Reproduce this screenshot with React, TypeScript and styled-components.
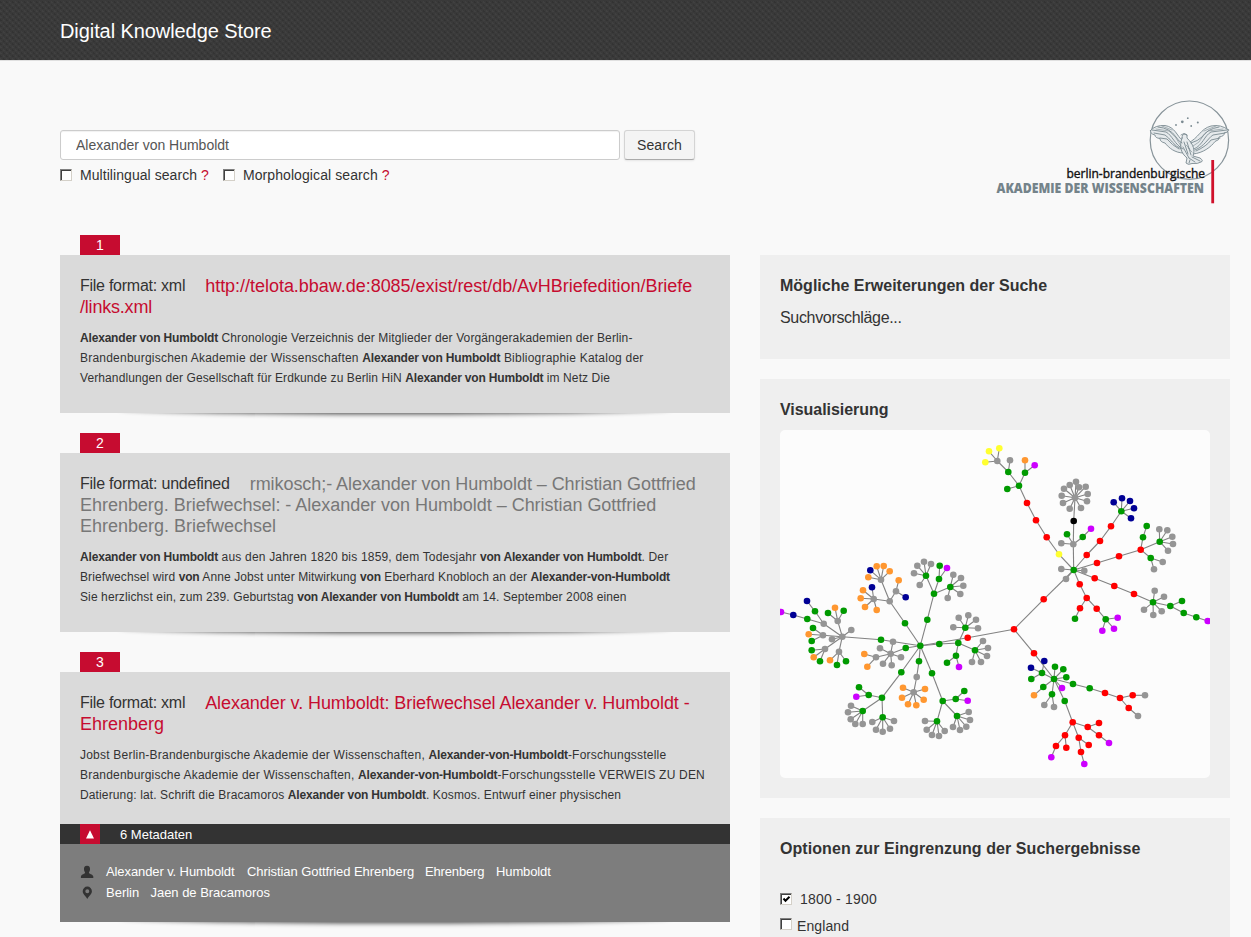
import React from "react";
import styled, { createGlobalStyle, css } from "styled-components";

const GlobalStyle = createGlobalStyle`
  * { box-sizing: border-box; }
  html, body { margin: 0; padding: 0; }
  body {
    background: #f9f9f9;
    color: #333;
    font-family: "Liberation Sans", Arial, sans-serif;
    font-size: 14px;
    overflow: hidden;
  }
`;

const Page = styled.div`
  width: 1251px;
  height: 937px;
  overflow: hidden;
`;

const Header = styled.header`
  height: 60px;
  padding: 2px 0 0 60px;
  display: flex;
  align-items: center;
  background:
    repeating-linear-gradient(45deg, rgba(255, 255, 255, 0.035) 0 2.12px, transparent 2.12px 4.24px),
    conic-gradient(#393939 25%, #343434 0 50%, #3a3a3a 0 75%, #333 0) 0 0 / 6px 6px;
`;

const SiteTitle = styled.h1`
  margin: 0;
  color: #fff;
  font-size: 20px;
  font-weight: 400;
  line-height: 24px;
  letter-spacing: -0.08px;
`;

const Top = styled.div`
  height: 175px;
  padding: 39px 21px 0 60px;
  border-top: 1px solid #e0e0e0;
  display: flex;
  justify-content: space-between;
`;

const SearchForm = styled.form`
  padding-top: 30px;
`;

const SearchRow = styled.div`
  display: flex;
  gap: 4px;
`;

const SearchInput = styled.input`
  width: 560px;
  height: 30px;
  padding: 0 15px;
  border: 1px solid #ccc;
  border-radius: 3px;
  background: #fff;
  box-shadow: inset 0 1px 1px rgba(0, 0, 0, 0.06);
  color: #555;
  font: 14px "Liberation Sans", Arial, sans-serif;
  letter-spacing: -0.02px;
  outline: none;
`;

const SearchButton = styled.button`
  width: 71px;
  height: 30px;
  padding: 0;
  border: 1px solid #d4d4d4;
  border-bottom-color: #aaa;
  border-radius: 3px;
  background: #f4f4f4;
  box-shadow: 0 1px 2px rgba(0, 0, 0, 0.08);
  color: #333;
  font: 14px "Liberation Sans", Arial, sans-serif;
  letter-spacing: 0.1px;
`;

const CheckRow = styled.div`
  display: flex;
  gap: 14px;
  margin-top: 5px;
`;

const CheckLabel = styled.label<{ $gap?: number; $tracking?: number }>`
  display: flex;
  align-items: center;
  gap: ${(p) => p.$gap ?? 8}px;
  height: 20px;
  letter-spacing: ${(p) => p.$tracking ?? 0.2}px;
  white-space: pre;
`;

const Box = styled.span<{ $raise?: number }>`
  width: 12px;
  height: 12px;
  flex: none;
  margin-bottom: ${(p) => p.$raise ?? 0}px;
  border: solid;
  border-width: 1px;
  border-color: #808080 #d4d0c8 #d4d0c8 #808080;
  box-shadow: inset 1px 1px 0 #404040;
  background: #fff;
  display: flex;
`;

const Hint = styled.span`
  color: #c60c30;
`;

const Columns = styled.div`
  display: flex;
  align-items: flex-start;
  gap: 30px;
  padding-left: 60px;
`;

const Results = styled.main`
  width: 670px;
  display: flex;
  flex-direction: column;
  gap: 20px;
`;

const Sidebar = styled.aside`
  width: 470px;
  padding-top: 20px;
  display: flex;
  flex-direction: column;
  gap: 20px;
`;

const Tag = styled.div`
  width: 40px;
  height: 20px;
  margin-left: 20px;
  background: #c60c30;
  color: #fff;
  line-height: 20px;
  text-align: center;
`;

const Card = styled.article`
  position: relative;
  z-index: 0;
  &::before {
    content: "";
    position: absolute;
    z-index: -1;
    left: 60px;
    right: 60px;
    bottom: 0;
    height: 40px;
    border-radius: 50% / 6px;
    box-shadow: 0 1px 5px rgba(0, 0, 0, 0.75);
  }
`;

const CardBody = styled.div<{ $tight?: boolean }>`
  padding: 20px 20px ${(p) => (p.$tight ? 19 : 25)}px;
  background: #dadada;
`;

const CardTitle = styled.h2`
  margin: 0 0 10px;
  font-size: 18px;
  font-weight: 400;
  line-height: 21px;
`;

const titleTone = { red: "#c60c30", grey: "#777" };

const Line = styled.span<{ $tracking: number }>`
  display: block;
  white-space: pre;
  letter-spacing: ${(p) => p.$tracking}px;
`;

const TitleRow = styled.span`
  display: flex;
  gap: 20px;
`;

const Format = styled.span<{ $tracking: number }>`
  font-size: 16px;
  letter-spacing: ${(p) => p.$tracking}px;
  white-space: pre;
`;

const TitleLink = styled.a<{ $tone: "red" | "grey"; $tracking: number; $block?: boolean }>`
  color: ${(p) => titleTone[p.$tone]};
  letter-spacing: ${(p) => p.$tracking}px;
  white-space: pre;
  ${(p) => (p.$block ? css`display: block;` : css`padding-top: 1px;`)}
`;

const Excerpt = styled.p`
  margin: 0;
  font-size: 12px;
  line-height: 20px;
  b { letter-spacing: -0.18px; }
`;

const MetaBar = styled.div`
  height: 20px;
  padding-left: 20px;
  display: flex;
  gap: 20px;
  background: #333;
  color: #fff;
  font-size: 13px;
  line-height: 21px;
`;

const Toggle = styled.span`
  width: 20px;
  height: 20px;
  background: #c60c30;
  display: flex;
  align-items: center;
  justify-content: center;
`;

const MetaPanel = styled.div`
  height: 78px;
  padding: 17px 20px 0;
  background: #7d7d7d;
  color: #fff;
  font-size: 13px;
`;

const MetaRow = styled.div`
  height: 21px;
  display: flex;
  align-items: center;
`;

const MetaIcon = styled.svg`
  width: 14px;
  height: 14px;
  margin-right: 12px;
  fill: #333;
`;

const MetaItem = styled.span<{ $w?: number; $tracking?: number }>`
  width: ${(p) => (p.$w ? p.$w + "px" : "auto")};
  letter-spacing: ${(p) => p.$tracking ?? 0}px;
  white-space: pre;
`;

const Panel = styled.section<{ $h: number }>`
  height: ${(p) => p.$h}px;
  padding: 20px;
  background: #efefef;
`;

const PanelTitle = styled.h3<{ $tracking: number }>`
  margin: 0;
  font-size: 16px;
  line-height: 21px;
  letter-spacing: ${(p) => p.$tracking}px;
`;

const Suggest = styled.p`
  margin: 11px 0 0;
  font-size: 16px;
  line-height: 21px;
  letter-spacing: -0.33px;
`;

const Chart = styled.svg`
  display: block;
  width: 430px;
  height: 348px;
  margin-top: 10px;
  border-radius: 5px;
  background: #fcfcfc;
`;

const Options = styled.div`
  margin-top: 30px;
  display: flex;
  flex-direction: column;
  gap: 7px;
`;

const colours = {
  a: "#959595",
  g: "#009a00",
  o: "#ff9730",
  r: "#ff0000",
  p: "#cc00ff",
  n: "#000095",
  y: "#ffff30",
  k: "#000000",
};
type Tone = keyof typeof colours;
type GraphNode = [Tone, number, number, GraphNode[]?];

const rightTree: GraphNode = ["g", 293.7, 140, [
  ["a", 281.3, 139], ["a", 286, 149], ["a", 304.3, 140.7],
  ["y", 279, 124.3, [["r", 266.7, 107.3, [["r", 256, 90.3, [["r", 247, 73, [["g", 239, 55.7, [
    ["g", 227.3, 59],
    ["g", 228.3, 42, [["a", 230, 30.3], ["a", 217.3, 31, [["y", 209, 21.3], ["y", 219.3, 18.3], ["y", 205.3, 32.3]]]]],
    ["g", 245, 42.7, [["o", 245, 30.3], ["p", 254.7, 35.3]]],
  ]]]]]]]]]],
  ["a", 293.3, 114.3, [
    ["a", 281.3, 113.3], ["g", 287, 104.3], ["g", 302.7, 107, [["p", 311, 98.7]]],
    ["k", 293.7, 91, [["a", 295, 67.7, [
      ["a", 296, 51.7], ["a", 305.7, 56.7], ["a", 299, 57.3], ["a", 289.7, 55], ["a", 284, 58.7], ["a", 281.7, 65.7],
      ["a", 283, 73], ["a", 289.7, 78.7], ["a", 301, 78], ["a", 307, 71.3], ["a", 307.7, 64],
    ]]]],
  ]],
  ["r", 306.7, 125, [["r", 320, 111, [["r", 331, 96.3, [["g", 341.3, 81.3, [
    ["n", 333.7, 72.3], ["n", 342, 68.3], ["n", 350, 71], ["n", 354, 78.3], ["n", 351, 88.3],
  ]]]]]]]],
  ["r", 317, 133, [["r", 339, 126.3, [["r", 360.7, 119.7, [
    ["g", 363, 107.3, [["g", 366.7, 96]]],
    ["g", 379.7, 111.7, [["a", 379.3, 99.3], ["a", 387.3, 100.3], ["a", 392.3, 106.7], ["a", 393, 114], ["a", 388, 120.7]]],
    ["g", 370.7, 128, [["a", 382.7, 132], ["a", 374, 139.3]]],
  ]]]]]],
  ["r", 314.7, 148.3, [["r", 334.3, 156, [["r", 354, 164, [["g", 373, 172.3, [
    ["a", 374.7, 160.7], ["a", 384, 166.7], ["a", 364, 179.7], ["a", 373.3, 185], ["a", 381.7, 181.3],
    ["g", 390.3, 176, [["g", 402, 171], ["g", 403.7, 183, [["g", 416.3, 187.3, [["p", 427.7, 191]]]]]]],
  ]]]]]]]],
  ["r", 299.7, 154.3, [["r", 306.7, 168, [
    ["r", 300, 178.3, [["g", 295, 188.7]]],
    ["r", 316.7, 178.7, [["g", 325.7, 189.3, [["p", 337.7, 187.7], ["p", 334, 198.7], ["p", 322.3, 200.7]]]]],
  ]]]],
]];

const lowerTree: GraphNode = ["g", 274, 249, [
  ["g", 262, 243, [["n", 251, 237.7], ["n", 264.3, 231], ["g", 251.3, 249]]],
  ["g", 275, 236.7], ["g", 283.3, 239.3], ["g", 286.3, 247.3], ["p", 282, 258],
  ["g", 263.3, 257, [["o", 254, 265.3]]],
  ["g", 272, 264.3, [["a", 264.3, 275], ["a", 274, 277]]],
  ["g", 284.7, 271, [["r", 292.7, 292.3, [
    ["r", 285, 305.3, [["r", 276, 316, [["p", 271.3, 327.3]]], ["r", 286.3, 317.7]]],
    ["r", 298.7, 307.7, [["r", 308.7, 315], ["r", 301, 322, [["p", 304.3, 334]]]]],
    ["r", 307.7, 297, [["r", 319, 293], ["r", 319, 305.3, [["p", 329, 313]]]]],
  ]]]],
  ["g", 293, 254, [["g", 309.7, 258.3, [["r", 325, 263, [["r", 340, 268, [
    ["r", 352.7, 265.3, [["a", 365, 265.3]]], ["r", 348.7, 278, [["a", 358, 286]]],
  ]]]]]]]],
]];

const graph: GraphNode = ["g", 140.3, 215.7, [
  ["g", 147.3, 189.7, [["g", 154, 163.7, [
    ["g", 146, 145.7, [["a", 137.3, 135.7], ["a", 144, 131.7], ["a", 151, 134], ["a", 134, 143.3], ["a", 139.7, 155]]],
    ["g", 159, 149, [["g", 159.7, 135.7], ["p", 167, 138]]],
    ["g", 170.3, 157, [["a", 173.3, 144.7], ["a", 181, 148], ["a", 183.3, 155.7], ["a", 180.3, 164], ["a", 167.7, 168]]],
  ]]]],
  ["g", 125, 193.3, [["a", 109.7, 171.3, [
    ["a", 101, 149.7, [["n", 90.3, 140.3], ["o", 96.7, 136.3], ["o", 103.7, 136], ["o", 109.7, 141.3], ["o", 88.3, 147.3]]],
    ["a", 116, 161.3, [["o", 118.7, 150.3], ["n", 125.7, 167.3]]],
    ["a", 93.7, 169, [["n", 92, 157.3], ["o", 83, 160.3], ["o", 80.7, 168.3], ["o", 85, 177], ["o", 96.7, 180]]],
  ]]]],
  ["g", 101, 209.7, [["a", 62.3, 206.7, [
    ["a", 71.3, 200], ["a", 52, 209.3],
    ["a", 57.7, 191, [["g", 48, 183], ["o", 55, 177.7], ["g", 63.7, 180.7]]],
    ["a", 43.7, 193.7, [["g", 35, 181.3, [["n", 27, 171]]], ["g", 27.3, 189, [["n", 13.3, 185, [["p", 1, 182]]]]]]],
    ["a", 43, 205.3, [["g", 33, 198], ["o", 28.7, 204.3], ["g", 31.7, 211]]],
    ["a", 45, 219, [["g", 31.7, 220.3], ["o", 33.7, 227.3], ["g", 40, 231.3]]],
    ["a", 59, 221.7, [["o", 50, 230.3], ["g", 57, 235], ["g", 66, 231.3]]],
  ]]]],
  ["g", 125.7, 218, [["a", 110.7, 223.7, [
    ["a", 113, 211.7], ["a", 100, 218.3], ["a", 96, 227.3, [["o", 84.3, 224], ["o", 87.3, 236.7]]],
    ["a", 121, 227.3], ["a", 103, 233.7], ["a", 111.7, 235.3],
  ]]]],
  ["g", 159.3, 214, [["g", 178.3, 213, [
    ["g", 185.3, 197.7, [["a", 178.7, 187.7], ["a", 188.3, 185.3], ["a", 196, 189.7], ["a", 198, 198.3], ["a", 173.3, 197.3]]],
    ["g", 195, 220.3, [["a", 203, 211], ["a", 208, 218], ["a", 207, 226], ["a", 201, 232], ["a", 192, 232]]],
    ["g", 176, 225.7, [["g", 167, 232.7], ["p", 179, 237]]],
  ]]]],
  ["r", 187.7, 207.7, [["r", 234, 199.3, [
    ["r", 263.7, 169.3, [rightTree]],
    ["r", 254, 223.3, [lowerTree]],
  ]]]],
  ["g", 139, 231.3, [["a", 136.7, 247, [["a", 133.7, 262.3, [
    ["o", 123, 257.7], ["o", 145, 259], ["o", 122, 267.7], ["o", 143.7, 269.7], ["o", 128, 274.3], ["o", 136.3, 275.3],
  ]]]]]],
  ["g", 121.3, 242.3, [["g", 102, 267.7, [
    ["g", 88.7, 265, [["g", 79, 257.3], ["p", 76.3, 266.7]]],
    ["g", 82.7, 281, [["a", 71, 275.7], ["a", 68, 282.3], ["a", 70.7, 289.3], ["a", 75.3, 294], ["a", 82.7, 294]]],
    ["g", 102.7, 287.3, [["a", 92.3, 292], ["a", 96, 299.7], ["a", 102.7, 301.7], ["a", 110, 298.7], ["a", 114, 291]]],
  ]]]],
  ["g", 152, 243.3, [["g", 162.7, 271, [
    ["g", 175.7, 269, [["g", 184.3, 261], ["p", 187.7, 270.7]]],
    ["g", 157, 291.3, [["a", 145, 291], ["a", 146.7, 299.7], ["a", 152, 305], ["a", 159, 306], ["a", 164.7, 301]]],
    ["g", 177, 286, [["a", 188.7, 282], ["a", 190, 290], ["a", 186.3, 296.7], ["a", 180, 300], ["a", 173, 297]]],
  ]]]],
]];

const edges: number[][] = [];
const dots: [Tone, number, number][] = [];
const walk = ([tone, x, y, children]: GraphNode) => {
  dots.push([tone, x, y]);
  (children ?? []).forEach((child) => {
    edges.push([x, y, child[1], child[2]]);
    walk(child);
  });
};
walk(graph);

const Visualisation = () => (
  <Chart viewBox="0 0 430 348">
    {edges.map(([x1, y1, x2, y2], i) => (
      <line key={i} x1={x1} y1={y1} x2={x2} y2={y2} stroke="#828282" strokeWidth="1.1" />
    ))}
    {dots.map(([tone, x, y], i) => (
      <circle key={i} cx={x} cy={y} r="3.3" fill={colours[tone]} />
    ))}
  </Chart>
);

const LogoSvg = styled.svg`
  width: 235px;
  height: 106px;
  flex: none;
`;

const Logo = () => (
  <LogoSvg viewBox="995 100 235 106">
    <circle cx="1189.4" cy="140.2" r="39.2" fill="none" stroke="#88949a" strokeWidth="1.2" />
    <g fill="#7b8a91">
      <circle cx="1176" cy="125" r="0.9" />
      <circle cx="1182.3" cy="121.8" r="1.4" />
      <circle cx="1187.8" cy="118.2" r="0.9" />
      <circle cx="1191.2" cy="126" r="0.9" />
      <circle cx="1197.8" cy="122.6" r="1" />
    </g>
    <g fill="#e6eaec" stroke="#7b8a91" strokeWidth="0.9" strokeLinejoin="round" strokeLinecap="round">
      <path d="M1150.5 130.5 Q1155 125 1165 125.5 C1175 127 1177 136 1182 140 L1184 153 C1175 153 1169 148 1165 143 Q1160 142 1160 138.5 Q1155 138 1155 135 Q1150 134 1150.5 130.5Z" />
      <path d="M1228.5 130 Q1221 124 1211 126 C1200 129 1199 138 1188 143 L1193 154 C1203 153 1211 147 1215 141.5 Q1220 140 1219 137 Q1225 136 1224 133 Q1228 133 1228.5 130Z" />
      <path d="M1182 138 Q1182 134 1185 134 Q1188 134 1187 138 C1194 145 1195 150 1193 156 L1200 158 Q1204 161 1201 162 Q1198 164 1192 163.5 Q1188 165.5 1186 163 L1187 158 C1181 153 1179 147 1182 138Z" />
      <path fill="none" d="M1152 130 L1166 132 C1172 135 1175 145 1183 149 M1154 133 L1165 135 C1170 138 1174 146 1181 149 M1158 127 Q1170 128 1176 137 Q1179 142 1182 143 M1160 138 L1167 139 Q1172 145 1179 149 M1227 130 L1211 132 C1204 136 1203 145 1194 149 M1225 133 L1213 135 C1208 138 1205 146 1195 150 M1219 127 Q1207 129 1202 137 Q1198 141 1191 143 M1220 138 L1211 140 Q1207 146 1196 151 M1184 142 L1188 154 M1187 142 L1191 155 M1183 147 L1189 158 M1189 158 L1195 162 M1192 157 L1200 161 M1190 160 L1189 163 M1181 135 L1184 133.5 L1187 135" />
      <path fill="none" strokeWidth="0.6" d="M1156 129 L1169 131 Q1176 136 1181 146 M1223 129 L1208 131 Q1203 135 1199 142 L1193 146 M1186 145 L1190 149 M1188 148 L1192 152 M1162 126 L1172 130 M1216 126 L1204 131" />
    </g>
    <text x="1066.5" y="177.5" fontFamily="Open Sans, sans-serif" fontSize="13" fill="#111" stroke="#111" strokeWidth="0.4" textLength="138.5" lengthAdjust="spacingAndGlyphs">berlin-brandenburgische</text>
    <text x="996.5" y="193" fontFamily="Open Sans, sans-serif" fontWeight="800" fontSize="13.2" fill="#74838a" textLength="207.5" lengthAdjust="spacingAndGlyphs">AKADEMIE DER WISSENSCHAFTEN</text>
    <rect x="1211.3" y="160" width="2.8" height="43.3" fill="#d0112b" />
  </LogoSvg>
);

const App = () => (
  <Page>
    <GlobalStyle />
    <Header>
      <SiteTitle>Digital Knowledge Store</SiteTitle>
    </Header>
    <Top>
      <SearchForm>
        <SearchRow>
          <SearchInput defaultValue="Alexander von Humboldt" />
          <SearchButton type="button">Search</SearchButton>
        </SearchRow>
        <CheckRow>
          <CheckLabel $tracking={0.06}><Box /><span>Multilingual search <Hint>?</Hint></span></CheckLabel>
          <CheckLabel $tracking={0.09}><Box /><span>Morphological search <Hint>?</Hint></span></CheckLabel>
        </CheckRow>
      </SearchForm>
      <Logo />
    </Top>
    <Columns>
      <Results>
        <div>
          <Tag>1</Tag>
          <Card>
            <CardBody>
              <CardTitle>
                <TitleRow>
                  <Format $tracking={-0.26}>File format: xml</Format>
                  <TitleLink $tone="red" $tracking={-0.03}>http://telota.bbaw.de:8085/exist/rest/db/AvHBriefedition/Briefe</TitleLink>
                </TitleRow>
                <TitleLink $tone="red" $tracking={-0.2} $block>/links.xml</TitleLink>
              </CardTitle>
              <Excerpt>
                <Line $tracking={0.12}><b>Alexander von Humboldt</b> Chronologie Verzeichnis der Mitglieder der Vorgängerakademien der Berlin-</Line>
                <Line $tracking={0.22}>Brandenburgischen Akademie der Wissenschaften <b>Alexander von Humboldt</b> Bibliographie Katalog der</Line>
                <Line $tracking={0.1}>Verhandlungen der Gesellschaft für Erdkunde zu Berlin HiN <b>Alexander von Humboldt</b> im Netz Die</Line>
              </Excerpt>
            </CardBody>
          </Card>
        </div>
        <div>
          <Tag>2</Tag>
          <Card>
            <CardBody>
              <CardTitle>
                <TitleRow>
                  <Format $tracking={-0.23}>File format: undefined</Format>
                  <TitleLink $tone="grey" $tracking={-0.06}>rmikosch;- Alexander von Humboldt – Christian Gottfried</TitleLink>
                </TitleRow>
                <TitleLink $tone="grey" $tracking={-0.03} $block>Ehrenberg. Briefwechsel: - Alexander von Humboldt – Christian Gottfried</TitleLink>
                <TitleLink $tone="grey" $tracking={0} $block>Ehrenberg. Briefwechsel</TitleLink>
              </CardTitle>
              <Excerpt>
                <Line $tracking={0.19}><b>Alexander von Humboldt</b> aus den Jahren 1820 bis 1859, dem Todesjahr <b>von Alexander von Humboldt</b>. Der</Line>
                <Line $tracking={0.11}>Briefwechsel wird <b>von</b> Anne Jobst unter Mitwirkung <b>von</b> Eberhard Knobloch an der <b>Alexander-von-Humboldt</b></Line>
                <Line $tracking={0.11}>Sie herzlichst ein, zum 239. Geburtstag <b>von Alexander von Humboldt</b> am 14. September 2008 einen</Line>
              </Excerpt>
            </CardBody>
          </Card>
        </div>
        <div>
          <Tag>3</Tag>
          <Card>
            <CardBody $tight>
              <CardTitle>
                <TitleRow>
                  <Format $tracking={-0.26}>File format: xml</Format>
                  <TitleLink $tone="red" $tracking={-0.07}>Alexander v. Humboldt: Briefwechsel Alexander v. Humboldt -</TitleLink>
                </TitleRow>
                <TitleLink $tone="red" $tracking={0} $block>Ehrenberg</TitleLink>
              </CardTitle>
              <Excerpt>
                <Line $tracking={0.22}>Jobst Berlin-Brandenburgische Akademie der Wissenschaften, <b>Alexander-von-Humboldt</b>-Forschungsstelle</Line>
                <Line $tracking={0.2}>Brandenburgische Akademie der Wissenschaften, <b>Alexander-von-Humboldt</b>-Forschungsstelle VERWEIS ZU DEN</Line>
                <Line $tracking={0.13}>Datierung: lat. Schrift die Bracamoros <b>Alexander von Humboldt</b>. Kosmos. Entwurf einer physischen</Line>
              </Excerpt>
            </CardBody>
            <MetaBar>
              <Toggle>
                <svg width="8" height="9" viewBox="0 0 8 9"><path d="M4 0.2 L8 8.5 H0Z" fill="#fff" /></svg>
              </Toggle>
              <MetaItem>6 Metadaten</MetaItem>
            </MetaBar>
            <MetaPanel>
              <MetaRow>
                <MetaIcon viewBox="0 0 14 14"><path d="M7 0.8 C9.4 0.8 10.2 2.2 10 4.5 C10 6 9.2 6.6 8.9 7.6 C8.7 9 12.8 9.4 13.3 11.5 V13 H0.9 V11.5 C1.4 9.4 5.3 9 5.1 7.6 C4.8 6.6 4 6 4 4.5 C3.8 2.2 4.6 0.8 7 0.8Z" /></MetaIcon>
                <MetaItem $w={141} $tracking={-0.1}>Alexander v. Humboldt</MetaItem>
                <MetaItem $w={178} $tracking={-0.07}>Christian Gottfried Ehrenberg</MetaItem>
                <MetaItem $w={71} $tracking={-0.15}>Ehrenberg</MetaItem>
                <MetaItem $tracking={-0.12}>Humboldt</MetaItem>
              </MetaRow>
              <MetaRow>
                <MetaIcon viewBox="0 0 14 14"><path fillRule="evenodd" d="M7.3 0.6 A4.6 4.6 0 0 1 11.9 5.2 C11.9 8.2 9.2 9.4 7.3 13 C5.4 9.4 2.7 8.2 2.7 5.2 A4.6 4.6 0 0 1 7.3 0.6Z M7.3 3.2 A2 2 0 1 0 7.3 7.2 A2 2 0 0 0 7.3 3.2Z" /></MetaIcon>
                <MetaItem $w={44.5}>Berlin</MetaItem>
                <MetaItem $tracking={-0.03}>Jaen de Bracamoros</MetaItem>
              </MetaRow>
            </MetaPanel>
          </Card>
        </div>
      </Results>
      <Sidebar>
        <Panel $h={104}>
          <PanelTitle $tracking={0.01}>Mögliche Erweiterungen der Suche</PanelTitle>
          <Suggest>Suchvorschläge...</Suggest>
        </Panel>
        <Panel $h={419}>
          <PanelTitle $tracking={-0.05}>Visualisierung</PanelTitle>
          <Visualisation />
        </Panel>
        <Panel $h={200}>
          <PanelTitle $tracking={0.07}>Optionen zur Eingrenzung der Suchergebnisse</PanelTitle>
          <Options>
            <CheckLabel>
              <Box>
                <svg width="10" height="10" viewBox="0 0 10 10"><path d="M2.5 4.5 L4.5 6.8 L8.5 2.8" fill="none" stroke="#000" strokeWidth="2" /></svg>
              </Box>
              <span>1800 - 1900</span>
            </CheckLabel>
            <CheckLabel $gap={5} $tracking={0.1}><Box $raise={4} /><span>England</span></CheckLabel>
          </Options>
        </Panel>
      </Sidebar>
    </Columns>
  </Page>
);

export default App;
